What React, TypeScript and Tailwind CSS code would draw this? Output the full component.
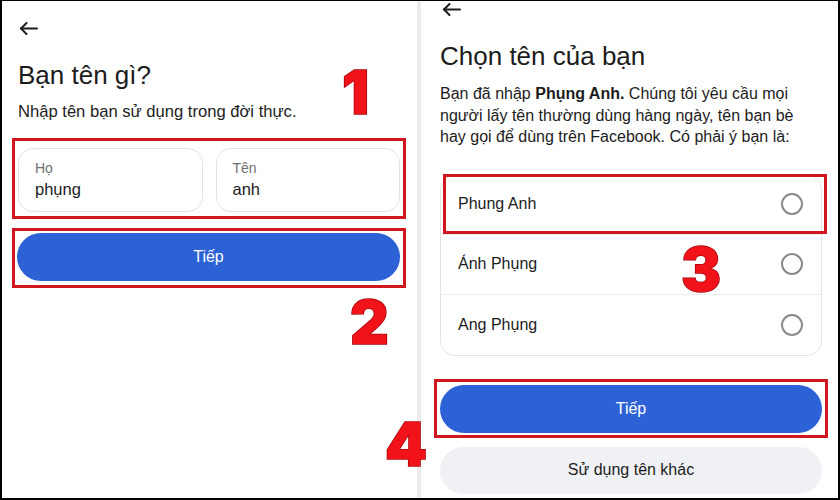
import type { ReactNode } from 'react'

const FONT = { fontFamily: '"Liberation Sans", Arial, sans-serif' }

function BackArrow() {
  return (
    <svg width="19" height="13" viewBox="0 0 19 13" fill="none">
      <path d="M18 6.5H2" stroke="#1c1c1c" strokeWidth="2" strokeLinecap="round" />
      <path d="M7.5 1L2 6.5L7.5 12" stroke="#1c1c1c" strokeWidth="2" strokeLinecap="round" strokeLinejoin="round" />
    </svg>
  )
}

function NameField({ label, value }: { label: string; value: string }) {
  return (
    <div className="flex-1 h-[64px] rounded-[15px] border border-[#e2e2e2] pl-[16px] pt-[10px]">
      <div className="text-[14px] leading-[18px] text-[#6f6f6f]">{label}</div>
      <div className="mt-[2px] text-[16.5px] leading-[20px] text-[#1c1c1c]">{value}</div>
    </div>
  )
}

function Step({ n, className }: { n: string; className: string }) {
  return (
    <div
      className={`absolute text-[60px] leading-none font-black text-[#f2131a] [-webkit-text-stroke:1.5px_#a5060c] [paint-order:stroke_fill] ${className}`}
      style={{ fontFamily: 'Inter, "DejaVu Sans", sans-serif' }}
    >
      {n}
    </div>
  )
}

function RedBox({ children, className = '' }: { children: ReactNode; className?: string }) {
  return <div className={`border-[3px] border-[#d0161e] ${className}`}>{children}</div>
}

const options = ['Phung Anh', 'Ánh Phụng', 'Ang Phụng']

export default function App() {
  return (
    <div
      className="relative w-[840px] h-[500px] flex bg-white border-l-2 border-r-2 border-t border-b-2 border-black overflow-hidden"
      style={FONT}
    >
      {/* man hinh 1 */}
      <div className="w-[415px] pl-[10px] pr-[11px] text-[#1c1c1c]">
        <div className="mt-[21px] ml-[7px]">
          <BackArrow />
        </div>
        <h1 className="mt-[25px] ml-[6px] text-[26px] leading-[30px] font-medium">Bạn tên gì?</h1>
        <p className="mt-[11px] ml-[6px] text-[16.6px] leading-[22px]">Nhập tên bạn sử dụng trong đời thực.</p>

        <RedBox className="mt-[15px] pt-[7px] pb-[4px] px-[3px]">
          <div className="flex gap-[13px]">
            <NameField label="Họ" value="phụng" />
            <NameField label="Tên" value="anh" />
          </div>
        </RedBox>

        <RedBox className="mt-[9px] pt-[2px] pb-[4px] pl-[2px] pr-[3px]">
          <button className="w-full h-[48px] rounded-full bg-[#2c62d6] text-white text-[16px] font-medium">
            Tiếp
          </button>
        </RedBox>
      </div>

      <div className="w-[4px] bg-[#ececec]" />

      {/* man hinh 2 */}
      <div className="flex-1 pl-[19px] pr-[16px] text-[#1c1c1c]">
        <div className="mt-[2px] ml-[2px]">
          <BackArrow />
        </div>
        <h1 className="mt-[25px] text-[26px] leading-[30px] font-medium">Chọn tên của bạn</h1>
        <p className="mt-[12px] text-[16px] leading-[21.5px]">
          Bạn đã nhập <span className="font-bold">Phụng Anh.</span> Chúng tôi yêu cầu mọi
          <br />
          người lấy tên thường dùng hàng ngày, tên bạn bè
          <br />
          hay gọi để dùng trên Facebook. Có phải ý bạn là:
        </p>

        <div className="relative mt-[26px] h-[182px] flex flex-col rounded-[15px] border border-[#e4e4e4]">
          {options.map((name, i) => (
            <div
              key={name}
              className={`flex-1 flex items-center justify-between pl-[17px] pr-[18px] ${i > 0 ? 'border-t border-[#eeeeee]' : ''}`}
            >
              <span className="text-[16px]">{name}</span>
              <span className="w-[22px] h-[22px] rounded-full border-2 border-[#8a8a8a]" />
            </div>
          ))}
          <div className="absolute left-[2px] top-[-1px] w-[384px] h-[60px] border-[3px] border-[#d0161e]" />
        </div>

        <RedBox className="mt-[23px] -mx-[6px] pt-[3px] pb-[2px] px-[3px]">
          <button className="w-full h-[48px] rounded-full bg-[#2c62d6] text-white text-[16px] font-medium">
            Tiếp
          </button>
        </RedBox>

        <button className="mt-[9px] w-full h-[47px] rounded-full bg-[#f0f1f4] text-[16px] font-medium text-[#1c1c1c]">
          Sử dụng tên khác
        </button>
      </div>

      <Step n="1" className="left-[340px] top-[61px]" />
      <Step n="2" className="left-[348px] top-[291px]" />
      <Step n="3" className="left-[679px] top-[238px]" />
      <Step n="4" className="left-[383px] top-[413px]" />
    </div>
  )
}
